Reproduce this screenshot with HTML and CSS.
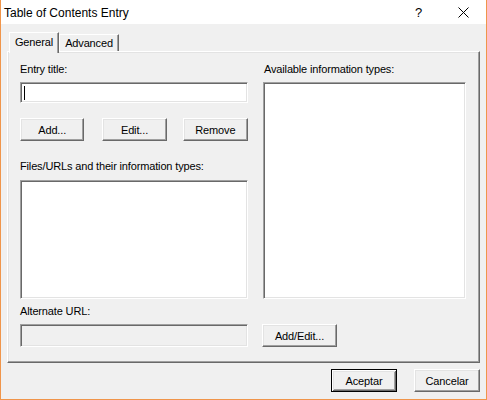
FILE: index.html
```html
<!DOCTYPE html>
<html>
<head>
<meta charset="utf-8">
<link rel="stylesheet" href="styles.css">
</head>
<body>
<div class="window">
  <div class="titlebar">
    <span class="title">Table of Contents Entry</span>
    <span class="help">?</span>
    <svg class="close" width="11" height="11" viewBox="0 0 11 11"><path d="M0.5 0.5 L10.5 10.5 M10.5 0.5 L0.5 10.5" stroke="#000" stroke-width="1" fill="none"/></svg>
  </div>
  <div class="client">
    <div class="tabs">
      <div class="tab active">General</div>
      <div class="tab">Advanced</div>
    </div>
    <div class="panel">
      <div class="col left">
        <div class="label">Entry title:</div>
        <div class="field entry"><span class="caret"></span></div>
        <div class="btnrow">
          <div class="btn w-add">Add...</div>
          <div class="btn w-edit">Edit...</div>
          <div class="btn w-remove">Remove</div>
        </div>
        <div class="label l-files">Files/URLs and their information types:</div>
        <div class="field list-files"></div>
        <div class="label l-alt">Alternate URL:</div>
        <div class="field alt disabled"></div>
      </div>
      <div class="col right">
        <div class="label l-avail">Available information types:</div>
        <div class="field list-avail"></div>
        <div class="btn addedit">Add/Edit...</div>
      </div>
    </div>
    <div class="footer">
      <div class="btn default">Aceptar</div>
      <div class="btn cancel">Cancelar</div>
    </div>
  </div>
</div>
</body>
</html>
```
FILE: styles.css
```css
html, body {
  margin: 0;
  padding: 0;
  background: #f0f0f0;
}
* { box-sizing: border-box; }
.window {
  width: 487px;
  height: 400px;
  border-left: 1px solid #f0954a;
  border-right: 1px solid #f0954a;
  border-bottom: 1px solid #f0954a;
  background: #f0f0f0;
  font-family: "Liberation Sans", Arial, sans-serif;
  font-size: 11px;
  letter-spacing: -0.15px;
  color: #000;
  display: flex;
  flex-direction: column;
}
.titlebar {
  height: 24px;
  background: #fff;
  display: flex;
  align-items: center;
  padding-left: 3px;
  letter-spacing: 0;
}
.title {
  font-size: 12px;
  flex: 1;
  padding-top: 1px;
}
.help {
  font-size: 13px;
  width: 8px;
  margin-right: 35px;
  padding-top: 1px;
}
.close {
  margin-right: 17px;
}
.client {
  padding: 8px 6px 0 6px;
}
.tabs {
  display: flex;
  align-items: flex-end;
  height: 19px;
  padding-left: 2px;
}
.tab {
  height: 17px;
  width: 60px;
  text-align: center;
  line-height: 15px;
  padding-top: 1px;
  border-top: 1px solid #fff;
  border-left: 1px solid #fff;
  border-right: 1px solid #696969;
  box-shadow: inset -1px 0 #a0a0a0;
  background: #f0f0f0;
}
.tab.active {
  width: 50px;
  height: 21px;
  margin-bottom: -2px;
  position: relative;
  z-index: 1;
  line-height: 15px;
  padding-top: 2px;
}
.panel {
  height: 312px;
  border: 1px solid;
  border-color: #fff #696969 #696969 #fff;
  box-shadow: inset -1px -1px #a0a0a0, inset 1px 1px #e3e3e3;
  padding: 11px 0 0 12px;
  display: flex;
  gap: 15px;
}
.col {
  display: flex;
  flex-direction: column;
}
.col.left { width: 228px; }
.col.right { width: 203px; }
.label {
  height: 13px;
  line-height: 13px;
  white-space: nowrap;
}
.l-avail { padding-left: 1px; }
.field {
  background: #fff;
  border: 1px solid;
  border-color: #a0a0a0 #fff #fff #a0a0a0;
  box-shadow: inset 1px 1px #696969, inset -1px -1px #e3e3e3;
}
.field.disabled { background: #f0f0f0; }
.entry {
  margin-top: 6px;
  height: 21px;
  padding: 3px 0 0 3px;
}
.caret {
  display: block;
  width: 1px;
  height: 14px;
  background: #000;
}
.btnrow {
  display: flex;
  margin-top: 15px;
}
.btn {
  height: 23px;
  background: #f0f0f0;
  border: 1px solid;
  border-color: #fff #696969 #696969 #fff;
  box-shadow: inset -1px -1px #a0a0a0, inset 1px 1px #e3e3e3;
  display: flex;
  align-items: center;
  justify-content: center;
  padding-top: 1px;
  white-space: nowrap;
}
.w-add { width: 65px; }
.w-edit { width: 65px; margin-left: 18px; }
.w-remove { width: 66px; margin-left: 16px; }
.l-files { margin-top: 19px; }
.list-files {
  margin-top: 7px;
  height: 119px;
}
.l-alt { margin-top: 6px; }
.alt {
  margin-top: 6px;
  height: 23px;
}
.list-avail {
  margin-top: 6px;
  height: 217px;
}
.addedit {
  width: 75px;
  margin-top: 25px;
  margin-left: -1px;
}
.footer {
  display: flex;
  justify-content: flex-end;
  margin-top: 6px;
  gap: 17px;
}
.footer .btn { width: 66px; }
.btn.default {
  border: 1px solid #000;
  box-shadow: inset 1px 1px #fff, inset -1px -1px #696969, inset 2px 2px #e3e3e3, inset -2px -2px #a0a0a0;
}
```
